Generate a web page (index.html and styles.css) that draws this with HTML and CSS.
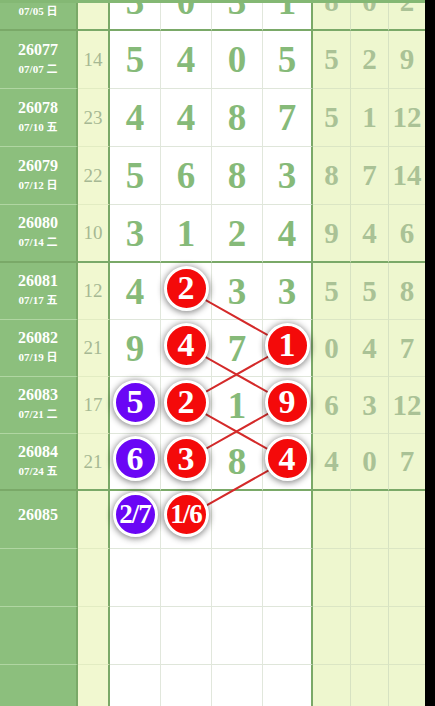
FILE: index.html
```html
<!DOCTYPE html>
<html lang="zh">
<head>
    <meta charset="utf-8">
    <meta name="viewport" content="width=device-width, initial-scale=1">
    <link rel="stylesheet" href="styles.css">
</head>
<body>

<div class="board">
    <div class="topbar"></div>

    <!-- predchádzajúci riadok, vidno len spodok -->
    <div class="clip">
        <div class="row thick">
            <div class="c-no"><span>07/05 日</span></div>
            <div class="c-sum"></div>
            <div class="c-ball">3</div><div class="c-ball">0</div><div class="c-ball">3</div><div class="c-ball last">1</div>
            <div class="c-tail">8</div><div class="c-tail">0</div><div class="c-tail end">2</div>
        </div>
    </div>

    <div class="row">
        <div class="c-no"><b>26077</b><span>07/07 二</span></div>
        <div class="c-sum">14</div>
        <div class="c-ball">5</div><div class="c-ball">4</div><div class="c-ball">0</div><div class="c-ball last">5</div>
        <div class="c-tail">5</div><div class="c-tail">2</div><div class="c-tail end">9</div>
    </div>
    <div class="row">
        <div class="c-no"><b>26078</b><span>07/10 五</span></div>
        <div class="c-sum">23</div>
        <div class="c-ball">4</div><div class="c-ball">4</div><div class="c-ball">8</div><div class="c-ball last">7</div>
        <div class="c-tail">5</div><div class="c-tail">1</div><div class="c-tail end">12</div>
    </div>
    <div class="row">
        <div class="c-no"><b>26079</b><span>07/12 日</span></div>
        <div class="c-sum">22</div>
        <div class="c-ball">5</div><div class="c-ball">6</div><div class="c-ball">8</div><div class="c-ball last">3</div>
        <div class="c-tail">8</div><div class="c-tail">7</div><div class="c-tail end">14</div>
    </div>
    <div class="row thick">
        <div class="c-no"><b>26080</b><span>07/14 二</span></div>
        <div class="c-sum">10</div>
        <div class="c-ball">3</div><div class="c-ball">1</div><div class="c-ball">2</div><div class="c-ball last">4</div>
        <div class="c-tail">9</div><div class="c-tail">4</div><div class="c-tail end">6</div>
    </div>

    <div class="row short">
        <div class="c-no"><b>26081</b><span>07/17 五</span></div>
        <div class="c-sum">12</div>
        <div class="c-ball">4</div>
        <div class="c-ball"><i class="ball red">2</i></div>
        <div class="c-ball">3</div>
        <div class="c-ball last">3</div>
        <div class="c-tail">5</div><div class="c-tail">5</div><div class="c-tail end">8</div>
    </div>
    <div class="row short">
        <div class="c-no"><b>26082</b><span>07/19 日</span></div>
        <div class="c-sum">21</div>
        <div class="c-ball">9</div>
        <div class="c-ball"><i class="ball red">4</i></div>
        <div class="c-ball">7</div>
        <div class="c-ball last"><i class="ball red">1</i></div>
        <div class="c-tail">0</div><div class="c-tail">4</div><div class="c-tail end">7</div>
    </div>
    <div class="row short">
        <div class="c-no"><b>26083</b><span>07/21 二</span></div>
        <div class="c-sum">17</div>
        <div class="c-ball"><i class="ball blue">5</i></div>
        <div class="c-ball"><i class="ball red">2</i></div>
        <div class="c-ball">1</div>
        <div class="c-ball last"><i class="ball red">9</i></div>
        <div class="c-tail">6</div><div class="c-tail">3</div><div class="c-tail end">12</div>
    </div>
    <div class="row short thick">
        <div class="c-no"><b>26084</b><span>07/24 五</span></div>
        <div class="c-sum">21</div>
        <div class="c-ball"><i class="ball blue">6</i></div>
        <div class="c-ball"><i class="ball red">3</i></div>
        <div class="c-ball">8</div>
        <div class="c-ball last"><i class="ball red">4</i></div>
        <div class="c-tail">4</div><div class="c-tail">0</div><div class="c-tail end">7</div>
    </div>

    <!-- predpoveď -->
    <div class="row">
        <div class="c-no next"><b>26085</b></div>
        <div class="c-sum"></div>
        <div class="c-ball"><i class="ball blue pair">2/7</i></div>
        <div class="c-ball"><i class="ball red pair">1/6</i></div>
        <div class="c-ball"></div>
        <div class="c-ball last"></div>
        <div class="c-tail"></div><div class="c-tail"></div><div class="c-tail end"></div>
    </div>

    <!-- prázdne riadky -->
    <div class="row">
        <div class="c-no"></div><div class="c-sum"></div>
        <div class="c-ball"></div><div class="c-ball"></div><div class="c-ball"></div><div class="c-ball last"></div>
        <div class="c-tail"></div><div class="c-tail"></div><div class="c-tail end"></div>
    </div>
    <div class="row">
        <div class="c-no"></div><div class="c-sum"></div>
        <div class="c-ball"></div><div class="c-ball"></div><div class="c-ball"></div><div class="c-ball last"></div>
        <div class="c-tail"></div><div class="c-tail"></div><div class="c-tail end"></div>
    </div>
    <div class="row">
        <div class="c-no"></div><div class="c-sum"></div>
        <div class="c-ball"></div><div class="c-ball"></div><div class="c-ball"></div><div class="c-ball last"></div>
        <div class="c-tail"></div><div class="c-tail"></div><div class="c-tail end"></div>
    </div>

    <!-- spojnice medzi guličkami -->
    <svg class="links" width="425" height="706" viewBox="0 0 425 706">
        <polyline points="186,289 287,346 186,403 287,460 186,517" />
        <polyline points="186,346 287,403 186,460" />
    </svg>
</div>

</body>
</html>
```

FILE: styles.css
```css
* {
    box-sizing: border-box;
}

body {
    margin: 0;
    background: #000;
    overflow: hidden;
}

/* celá tabuľka */
.board {
    position: relative;
    width: 425px;
    height: 706px;
    overflow: hidden;
    background: #fff;
    font-family: "Liberation Serif", "Noto Sans CJK SC", serif;
}

.topbar {
    position: relative;
    z-index: 3;
    height: 3px;
    background: #84b874;
}

/* orezaný horný riadok */
.clip {
    height: 28px;
    overflow: hidden;
    display: flex;
    align-items: flex-end;
}

.clip .c-no {
    justify-content: flex-end;
    padding-bottom: 9px;
}

.row {
    display: flex;
    height: 58px;
    flex: none;
    width: 425px;
}

.row.short {
    height: 57px;
}

.row > div {
    border-bottom: 1px solid #dfe6da;
    display: flex;
    align-items: center;
    justify-content: center;
}

/* číslo ťahu a dátum */
.c-no {
    width: 78px;
    flex-direction: column;
    background: #8cbf7d;
    color: #fff;
    border-right: 2px solid #7aa968;
    padding-bottom: 2px;
}

.row > .c-no {
    border-bottom-color: #b0d6a2;
}

.c-no b {
    font-size: 16px;
    line-height: 20px;
}

.c-no span {
    font-size: 11px;
    font-weight: bold;
    line-height: 18px;
}

.c-no.next {
    justify-content: flex-start;
    padding-top: 14px;
}

/* súčet */
.c-sum {
    width: 32px;
    background: #f1f8d0;
    border-right: 2px solid #7aa968;
    color: #a6b893;
    font-size: 19px;
}

.row > .c-sum {
    border-bottom-color: #e2ecc2;
}

/* hlavné čísla */
.c-ball {
    width: 51px;
    border-right: 1px solid #e1e7dc;
    color: #86ba79;
    font-size: 37px;
    font-weight: bold;
}

.c-ball.last {
    width: 50px;
    border-right: 2px solid #7aa968;
}

/* koncovky */
.c-tail {
    width: 38px;
    background: #eef7cf;
    border-right: 1px solid #d6e2c2;
    color: #aac296;
    font-size: 29px;
    font-weight: bold;
}

.c-tail.end {
    width: 36px;
    border-right: 0;
}

.row > .c-tail {
    border-bottom-color: #dbe6c4;
}

.row.thick > div {
    border-bottom: 2px solid #7aa968;
}

/* guličky */
.ball {
    position: relative;
    z-index: 2;
    display: flex;
    align-items: center;
    justify-content: center;
    width: 45px;
    height: 45px;
    margin-top: -6px;
    border: 3px solid #fff;
    border-radius: 50%;
    color: #fff;
    font-style: normal;
    font-size: 34px;
    line-height: 1;
    box-shadow: 0 1px 6px 1px rgba(0, 0, 0, 0.45);
}

.ball.red {
    background: #f40a0a;
}

.ball.blue {
    background: #6a06f5;
}

.ball.pair {
    font-size: 27px;
    letter-spacing: -1px;
    margin-top: -10px;
}

.links {
    position: absolute;
    left: 0;
    top: 0;
    z-index: 1;
    pointer-events: none;
}

.links polyline {
    fill: none;
    stroke: #d42a2a;
    stroke-width: 2;
}
```
